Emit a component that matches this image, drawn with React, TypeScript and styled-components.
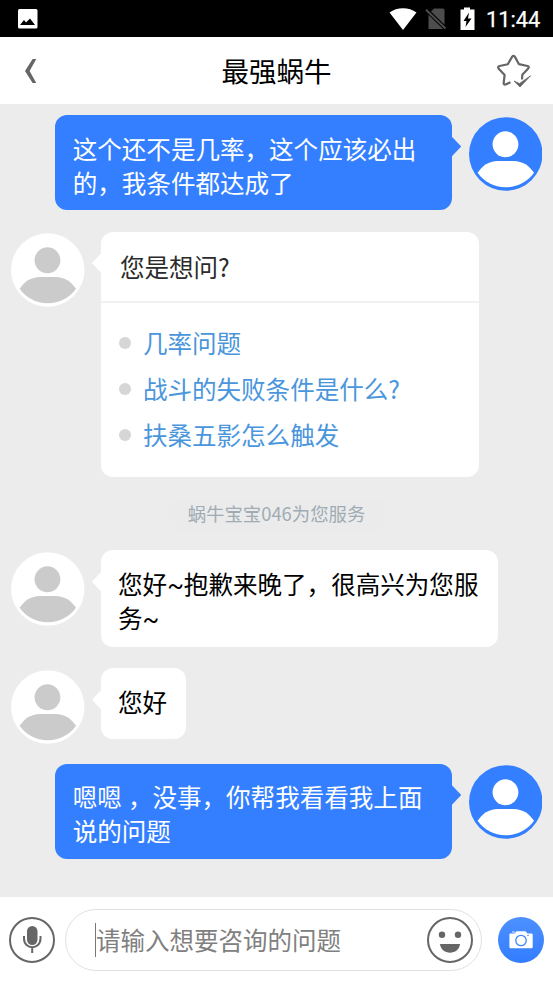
import React from 'react';
import styled, { createGlobalStyle, css } from 'styled-components';

const GlobalStyle = createGlobalStyle`
  * { box-sizing: border-box; }
  body {
    margin: 0;
    background: #ececec;
    font-family: "Noto Sans CJK SC", sans-serif;
  }
`;

const Screen = styled.div`
  display: flex;
  flex-direction: column;
  width: 553px;
  height: 983px;
  overflow: hidden;
  background: #ececec;
`;

const StatusBar = styled.div`
  display: flex;
  align-items: center;
  justify-content: space-between;
  height: 37px;
  padding: 0 12px 0 18px;
  background: #000;
  color: #fff;
`;

const StatusIcons = styled.div`
  display: flex;
  align-items: center;
`;

const Clock = styled.span`
  width: 55px;
  margin-left: 11px;
  font-family: Roboto, sans-serif;
  font-size: 21.8px;
  line-height: 37px;
  font-weight: 400;
  -webkit-text-stroke: 0.25px #fff;
  padding-top: 1px;
  white-space: nowrap;
`;

const Header = styled.header`
  display: grid;
  grid-template-columns: 80px 1fr 80px;
  align-items: center;
  height: 67px;
  background: #fff;
`;

const Title = styled.h1`
  margin: 0;
  padding-bottom: 2px;
  font-size: 27.5px;
  font-weight: 400;
  line-height: 40px;
  text-align: center;
  color: #000;
`;

const HeaderButton = styled.button<{ $end?: boolean }>`
  display: flex;
  justify-content: ${(p) => (p.$end ? 'flex-end' : 'flex-start')};
  padding: ${(p) => (p.$end ? '0 22.5px 0 0' : '0 0 0 24px')};
  border: 0;
  background: none;
`;

const Chat = styled.main`
  flex: 1;
  display: flex;
  flex-direction: column;
  padding: 11px 11px 0;
`;

const MessageRow = styled.div<{ $mine?: boolean; $gap?: number }>`
  display: flex;
  flex-direction: ${(p) => (p.$mine ? 'row-reverse' : 'row')};
  align-items: flex-start;
  gap: ${(p) => (p.$mine ? 16.8 : 16.9)}px;
  margin-bottom: ${(p) => p.$gap ?? 21}px;
`;

const AvatarSvg = styled.svg`
  flex: none;
  display: block;
  margin-top: 1.5px;
`;

const Bubble = styled.div<{ $mine?: boolean; $card?: boolean; $wide?: boolean }>`
  position: relative;
  max-width: 397px;
  min-height: 71px;
  border-radius: 12px;
  font-size: 24.55px;
  line-height: 34px;
  background: #fff;
  color: #000;
  ${(p) =>
    p.$card
      ? css`width: 377.5px; color: #2b2b2b;`
      : css`
          font-family: Roboto, "Noto Sans CJK SC", sans-serif;
          padding: ${p.$mine ? '18.5px 18px 8.7px' : '18.5px 19px 10.5px 16.7px'};
        `}
  ${(p) => p.$wide && css`width: ${p.$mine ? 397 : 396.5}px;`}
  ${(p) => p.$mine && css`background: #337fff; color: #fff;`}

  &::before {
    content: '';
    position: absolute;
    top: 21px;
    width: 10px;
    height: 21px;
    background: inherit;
    ${(p) =>
      p.$mine
        ? css`right: -9.5px; clip-path: polygon(0 0, 100% 50%, 0 100%);`
        : css`left: -9.5px; clip-path: polygon(100% 0, 0 50%, 100% 100%);`}
  }
`;

const Line = styled.div`
  height: 34px;
  white-space: pre;
`;

const CardTitle = styled.div`
  height: 71px;
  padding: 18px 18.5px 0;
  border-bottom: 2px solid #f1f1f1;
`;

const Questions = styled.ul`
  list-style: none;
  margin: 0;
  padding: 18px 18px 19px;
`;

const Question = styled.li`
  display: flex;
  align-items: center;
  gap: 11.5px;
  height: 45.8px;
  color: #4a96dc;
  white-space: nowrap;

  &::before {
    content: '';
    width: 12px;
    height: 12px;
    border-radius: 50%;
    background: #d6d6d6;
  }
`;

const Notice = styled.div`
  align-self: center;
  height: 32px;
  margin-bottom: 19.8px;
  padding: 0 19px;
  border-radius: 10px;
  background: #ebebeb;
  color: #9facb4;
  font-size: 18.4px;
  line-height: 31px;
`;

const Composer = styled.footer`
  display: flex;
  align-items: center;
  height: 86px;
  padding: 0 9px;
  background: #fff;
`;

const InputPill = styled.div`
  display: flex;
  align-items: center;
  justify-content: space-between;
  width: 417.5px;
  height: 62px;
  margin: 0 15.5px 0 9.5px;
  padding: 0 8px 0 29.5px;
  border: 1px solid #e1e1e6;
  border-radius: 31px;
`;

const Placeholder = styled.div`
  height: 34px;
  border-left: 1px solid #777;
  font-size: 24.5px;
  line-height: 34px;
  color: #808080;
  white-space: nowrap;
`;

const Icon = styled.svg`
  display: block;
  flex: none;
`;

function Avatar({ mine = false }: { mine?: boolean }) {
  return (
    <AvatarSvg width="73.5" height="74" viewBox="0 0 74 74">
      <circle cx="37" cy="37" r="37" fill={mine ? '#337fff' : '#fff'} />
      <circle cx="36.7" cy="27.2" r="13" fill={mine ? '#fff' : '#cbcbcb'} />
      <path
        d="M29 44 H45 C54 44 61 49 65.500 56 C59 65 49 70.500 37 70.500 C25 70.500 15 65 8.700 56 C13 49 20 44 29 44Z"
        fill={mine ? '#fff' : '#cbcbcb'}
      />
    </AvatarSvg>
  );
}

function Message({ lines, mine, gap, wide }: { lines: string[]; mine?: boolean; gap?: number; wide?: boolean }) {
  return (
    <MessageRow $mine={mine} $gap={gap}>
      <Avatar mine={mine} />
      <Bubble $mine={mine} $wide={wide}>
        {lines.map((line) => (
          <Line key={line}>{line}</Line>
        ))}
      </Bubble>
    </MessageRow>
  );
}

const questions = ['几率问题', '战斗的失败条件是什么?', '扶桑五影怎么触发'];

export default function App() {
  return (
    <Screen>
      <GlobalStyle />
      <StatusBar>
        <Icon width="20" height="20" viewBox="0 0 20 20">
          <rect width="19.5" height="19.5" rx="1.5" fill="#fff" />
          <path d="M2 16 L6 11 L8 13.5 L12 9.5 L17 16Z" fill="#000" />
        </Icon>
        <StatusIcons>
          <Icon width="28" height="22" viewBox="0 0 28 22">
            <path d="M0.5 4.5 C8-1.2 20-1.2 27.5 4.5 L14 22Z" fill="#fff" />
          </Icon>
          <Icon width="37" height="22" viewBox="0 0 37 22">
            <path d="M17 0.5 H26 Q27.5 0.5 27.5 2 V21 H11.5 V6Z" fill="#4d4d4d" />
            <path d="M10 2.5 L29 21" stroke="#000" strokeWidth="4" />
            <path d="M9 1.7 L28.5 20.5" stroke="#4d4d4d" strokeWidth="2" />
          </Icon>
          <Icon width="21" height="23" viewBox="0 0 21 23">
            <path d="M6.5 2.5 H10 V0.5 H16 V2.5 H20.5 V23 H6.5Z" fill="#fff" />
            <path d="M15 5.5 L9.5 14 H12.5 L11.5 20 L17.5 11.5 H14Z" fill="#000" />
          </Icon>
          <Clock>11:44</Clock>
        </StatusIcons>
      </StatusBar>

      <Header>
        <HeaderButton aria-label="返回">
          <Icon width="14" height="24" viewBox="0 0 14 24">
            <path d="M8.6 0 H12.3 L5.6 12 L12.3 24 H8.6 L1 12Z" fill="#666" />
          </Icon>
        </HeaderButton>
        <Title>最强蜗牛</Title>
        <HeaderButton aria-label="评价" $end>
          <Icon width="35" height="36" viewBox="0 0 35 36" fill="none" stroke="#666" strokeWidth="2.2" strokeLinejoin="round">
            <path d="M14.500 29.200 L9.500 31.500 Q7.500 32 7.700 29.800 L8.600 22 L2.500 15.500 Q1.400 13.500 3.600 13 L11.800 11.200 L16.200 3.600 Q17.500 2 18.800 3.600 L23 11.200 L31.500 13 Q33.500 13.500 32.200 15.500 L26.300 21.800 L26 26.500" />
            <path d="M18 28 L23.500 30.600 L34.500 22.800 L24 34 L18 28Z" fill="#666" strokeWidth="0.8" />
          </Icon>
        </HeaderButton>
      </Header>

      <Chat>
        <Message mine wide lines={['这个还不是几率，这个应该必出', '的，我条件都达成了']} gap={21.4} />
        <MessageRow $gap={21.5}>
          <Avatar />
          <Bubble $card>
            <CardTitle>您是想问?</CardTitle>
            <Questions>
              {questions.map((q) => (
                <Question key={q}>{q}</Question>
              ))}
            </Questions>
          </Bubble>
        </MessageRow>
        <Notice>蜗牛宝宝046为您服务</Notice>
        <Message wide lines={['您好~抱歉来晚了，很高兴为您服', '务~']} />
        <Message lines={['您好']} gap={19.8} />
        <Message mine wide lines={['嗯嗯 ，没事，你帮我看看我上面', '说的问题']} />
      </Chat>

      <Composer>
        <Icon width="46" height="46" viewBox="0 0 46 46" fill="none" stroke="#666" strokeWidth="2">
          <circle cx="23" cy="23" r="22" />
          <rect x="18" y="9" width="10.5" height="19" rx="5.2" fill="#666" stroke="none" />
          <path d="M15 19 V21.5 C15 33 31.5 33 31.5 21.5 V19 M23.2 30 V36" />
        </Icon>
        <InputPill>
          <Placeholder>请输入想要咨询的问题</Placeholder>
          <Icon width="46" height="46" viewBox="0 0 46 46">
            <circle cx="23" cy="23" r="22" fill="none" stroke="#666" strokeWidth="2" />
            <circle cx="15" cy="17.7" r="3.2" fill="#666" />
            <circle cx="31" cy="17.7" r="3.2" fill="#666" />
            <path d="M13 27 H33 C32 38.500 14 38.500 13 27Z" fill="#666" />
          </Icon>
        </InputPill>
        <Icon width="46" height="46" viewBox="0 0 46 46">
          <defs>
            <linearGradient id="camera" x1="0" y1="0" x2="0" y2="1">
              <stop offset="0" stopColor="#4d90ff" />
              <stop offset="1" stopColor="#327dff" />
            </linearGradient>
          </defs>
          <circle cx="23" cy="23" r="23" fill="url(#camera)" />
          <path d="M12 16.500 H16.500 L18.500 14.200 H27.500 L29.500 16.500 H33.500 Q34.700 16.500 34.700 17.700 V30 Q34.700 31.300 33.500 31.300 H12.500 Q11.400 31.300 11.400 30 V17.500 Q11.400 16.500 12 16.500Z" fill="#fff" />
          <rect x="14" y="14.300" width="3" height="1.400" fill="#b8d2ff" />
          <circle cx="23" cy="23.500" r="5.200" fill="none" stroke="#4287fa" strokeWidth="1.300" />
          <circle cx="30" cy="18.500" r="0.800" fill="#4287fa" />
        </Icon>
      </Composer>
    </Screen>
  );
}
